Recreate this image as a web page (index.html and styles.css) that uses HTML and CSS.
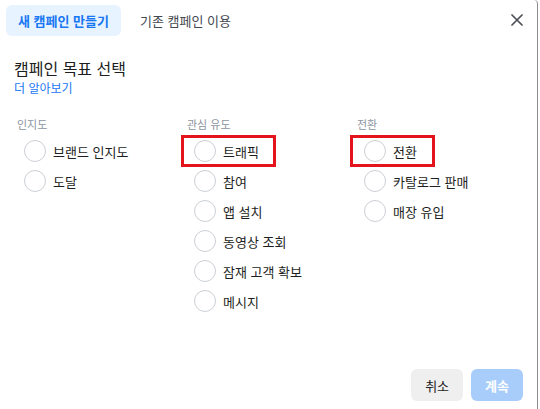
FILE: index.html
```html
<!DOCTYPE html>
<html lang="ko">
<head>
<meta charset="utf-8">
<link rel="stylesheet" href="styles.css">
</head>
<body>
<div class="dialog">
  <div class="header">
    <div class="tabs">
      <div class="tab active">새 캠페인 만들기</div>
      <div class="tab">기존 캠페인 이용</div>
    </div>
    <button class="close" aria-label="닫기">
      <svg width="12" height="12" viewBox="0 0 12 12"><path d="M1 1L11 11M11 1L1 11" stroke="#4b4f56" stroke-width="1.7" stroke-linecap="round"/></svg>
    </button>
  </div>
  <div class="intro">
    <div class="title">캠페인 목표 선택</div>
    <a class="link" href="#">더 알아보기</a>
  </div>
  <div class="columns">
    <div class="col">
      <div class="col-head">인지도</div>
      <div class="option"><span class="radio"></span><span>브랜드 인지도</span></div>
      <div class="option"><span class="radio"></span><span>도달</span></div>
    </div>
    <div class="col">
      <div class="col-head">관심 유도</div>
      <div class="option hl"><span class="radio"></span><span>트래픽</span></div>
      <div class="option"><span class="radio"></span><span>참여</span></div>
      <div class="option"><span class="radio"></span><span>앱 설치</span></div>
      <div class="option"><span class="radio"></span><span>동영상 조회</span></div>
      <div class="option"><span class="radio"></span><span>잠재 고객 확보</span></div>
      <div class="option"><span class="radio"></span><span>메시지</span></div>
    </div>
    <div class="col">
      <div class="col-head">전환</div>
      <div class="option hl wide"><span class="radio"></span><span>전환</span></div>
      <div class="option"><span class="radio"></span><span>카탈로그 판매</span></div>
      <div class="option"><span class="radio"></span><span>매장 유입</span></div>
    </div>
  </div>
  <div class="footer">
    <button class="btn cancel">취소</button>
    <button class="btn next">계속</button>
  </div>
</div>
</body>
</html>
```
FILE: styles.css
```css
* { box-sizing: border-box; }
html, body { margin: 0; padding: 0; background: #fff; }
body {
  font-family: "Noto Sans CJK KR", "Noto Sans", sans-serif;
  color: #1c1e21;
  font-size: 13px;
}
.dialog {
  width: 538px;
  height: 409px;
  border-right: 1px solid #8d8d8d;
  border-top-right-radius: 4px;
  display: flex;
  flex-direction: column;
  position: relative;
}
.header {
  display: flex;
  align-items: center;
  justify-content: space-between;
  padding: 5px 12px 0 6px;
}
.tabs { display: flex; gap: 7px; }
.tab {
  height: 31px;
  padding: 0 12px;
  display: flex;
  align-items: center;
  border-radius: 6px;
  color: #444950;
  font-size: 13px;
}
.tab.active {
  background: #e7f3ff;
  color: #1877f2;
  font-weight: 700;
  padding: 0 12px;
}
.close {
  border: 0;
  background: none;
  padding: 0;
  width: 16px;
  height: 16px;
  display: flex;
  align-items: center;
  justify-content: center;
  margin-top: -1px;
}
.intro {
  padding: 22px 14px 0;
  display: flex;
  flex-direction: column;
}
.title {
  font-size: 16px;
  line-height: 20px;
  color: #1c1e21;
}
.link {
  margin-top: 2px;
  font-size: 12px;
  line-height: 16px;
  color: #1877f2;
  text-decoration: none;
}
.columns {
  display: grid;
  grid-template-columns: 170px 170px 170px;
  padding: 20px 0 0 17px;
}
.col-head {
  font-size: 11px;
  line-height: 16px;
  color: #8d949e;
  margin-bottom: 4px;
}
.option {
  display: flex;
  width: max-content;
  align-items: center;
  height: 30px;
  margin-left: -5px;
  padding: 0 16px 0 12px;
  gap: 7px;
  font-size: 13px;
  color: #1c1e21;
}
.option.hl {
  outline: 3px solid #e3141b;
  outline-offset: -2px;
}
.option.hl.wide {
  margin-left: -6px;
  padding: 0 17px 0 13px;
}
.radio {
  width: 22px;
  height: 22px;
  border-radius: 50%;
  border: 1px solid #ccd0d5;
  background: #fff;
  flex: none;
}
.footer {
  margin-top: auto;
  display: flex;
  justify-content: flex-end;
  gap: 8px;
  padding: 0 14px 8px 0;
}
.btn {
  height: 32px;
  border: 0;
  border-radius: 6px;
  font-family: inherit;
  font-size: 13px;
  padding: 0 14px;
}
.btn.cancel { background: #efefef; color: #1c1e21; }
.btn.next { background: #a8cdfb; color: #fff; font-weight: 700; }
```
